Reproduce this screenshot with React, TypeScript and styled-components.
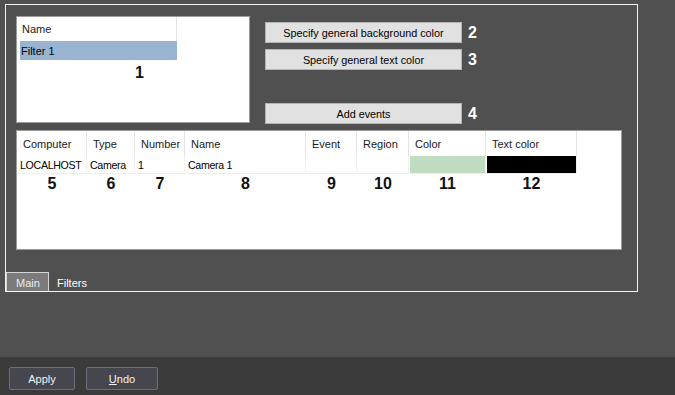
import React from "react";
import styled, { createGlobalStyle } from "styled-components";

const GlobalStyle = createGlobalStyle`
  html, body {
    margin: 0;
    padding: 0;
    background: #505050;
  }
  body {
    font-family: "Liberation Sans", Arial, sans-serif;
    font-size: 11px;
  }
`;

interface Column {
  title: string;
  width: number;
  value: string;
  fill?: string;
  mark: string;
}

const columns: Column[] = [
  { title: "Computer", width: 70, value: "LOCALHOST", mark: "5" },
  { title: "Type", width: 48, value: "Camera", mark: "6" },
  { title: "Number", width: 50, value: "1", mark: "7" },
  { title: "Name", width: 121, value: "Camera 1", mark: "8" },
  { title: "Event", width: 51, value: "", mark: "9" },
  { title: "Region", width: 52, value: "", mark: "10" },
  { title: "Color", width: 77, value: "", fill: "#c0dcc0", mark: "11" },
  { title: "Text color", width: 91, value: "", fill: "#000000", mark: "12" },
];

const App = () => {
  return (
    <>
      <GlobalStyle />
      <Page>
        <Content>
          <Frame>
            <Panel>
              <TopSection>
                <FilterList>
                  <ListHeader>
                    <HeaderCell width={160}>Name</HeaderCell>
                  </ListHeader>
                  <SelectedRow>Filter 1</SelectedRow>
                  <ListMark>1</ListMark>
                </FilterList>

                <ButtonColumn>
                  <ButtonRow>
                    <ActionButton>Specify general background color</ActionButton>
                    <Mark light>2</Mark>
                  </ButtonRow>
                  <ButtonRow>
                    <ActionButton>Specify general text color</ActionButton>
                    <Mark light>3</Mark>
                  </ButtonRow>
                  <ButtonRow offset={27}>
                    <ActionButton>Add events</ActionButton>
                    <Mark light>4</Mark>
                  </ButtonRow>
                </ButtonColumn>
              </TopSection>

              <EventsTable>
                <HeaderRow>
                  {columns.map((col) => (
                    <HeaderCell key={col.title} width={col.width}>
                      {col.title}
                    </HeaderCell>
                  ))}
                </HeaderRow>
                <TableRow>
                  {columns.map((col) =>
                    col.fill ? (
                      <DataCell key={col.title} width={col.width}>
                        <ColorSwatch fill={col.fill} />
                      </DataCell>
                    ) : (
                      <DataCell key={col.title} width={col.width}>
                        {col.value}
                      </DataCell>
                    )
                  )}
                </TableRow>
                <TableRow>
                  {columns.map((col) => (
                    <MarkCell key={col.title} width={col.width}>
                      <Mark>{col.mark}</Mark>
                    </MarkCell>
                  ))}
                </TableRow>
              </EventsTable>
            </Panel>

            <TabBar>
              <Tab active>Main</Tab>
              <Tab>Filters</Tab>
            </TabBar>
          </Frame>
        </Content>

        <Footer>
          <FooterButton width={66}>Apply</FooterButton>
          <FooterButton width={72}>
            <u>U</u>ndo
          </FooterButton>
        </Footer>
      </Page>
    </>
  );
};

export default App;

const Page = styled.div`
  display: flex;
  flex-direction: column;
  width: 675px;
  height: 395px;
  overflow: hidden;
`;

const Content = styled.div`
  flex: 1;
  padding: 4px 0 0 5px;
`;

const Frame = styled.div`
  box-sizing: border-box;
  display: flex;
  flex-direction: column;
  width: 633px;
  height: 288px;
  border: 1px solid #f4f4f4;
`;

const Panel = styled.div`
  flex: 1;
  padding: 11px 0 0 10px;
`;

const TopSection = styled.div`
  display: flex;
  gap: 15px;
`;

const FilterList = styled.div`
  box-sizing: border-box;
  width: 234px;
  height: 107px;
  background: #fff;
  border: 1px solid #9c9c9c;
`;

const ListHeader = styled.div`
  display: flex;
  height: 24px;
`;

const HeaderCell = styled.div<{ width: number }>`
  box-sizing: border-box;
  flex: 0 0 ${(p) => p.width}px;
  display: flex;
  align-items: center;
  padding-left: 5px;
  color: #1a1a1a;
  border-right: 1px solid #e3e3e3;
`;

const SelectedRow = styled.div`
  display: flex;
  align-items: center;
  width: 157px;
  height: 19px;
  margin-left: 3px;
  padding-left: 1px;
  box-sizing: border-box;
  background: #99b4d1;
  color: #000;
`;

const ListMark = styled.div`
  margin-top: 3px;
  padding-left: 118px;
  font-size: 16px;
  font-weight: bold;
  line-height: 20px;
  color: #111;
`;

const ButtonColumn = styled.div`
  display: flex;
  flex-direction: column;
  gap: 6px;
  padding-top: 6px;
`;

const ButtonRow = styled.div<{ offset?: number }>`
  display: flex;
  align-items: center;
  gap: 6px;
  margin-top: ${(p) => p.offset ?? 0}px;
`;

const ActionButton = styled.button`
  box-sizing: border-box;
  width: 197px;
  height: 21px;
  padding: 0;
  background: #e1e1e1;
  border: 1px solid #b4b4b4;
  border-radius: 0;
  font-family: "Liberation Sans", Arial, sans-serif;
  font-size: 10.8px;
  color: #000;
`;

const Mark = styled.span<{ light?: boolean }>`
  font-size: 16px;
  font-weight: bold;
  line-height: 20px;
  color: ${(p) => (p.light ? "#ffffff" : "#111111")};
`;

const EventsTable = styled.div`
  box-sizing: border-box;
  width: 606px;
  height: 120px;
  margin-top: 6px;
  background: #fff;
  border: 1px solid #9c9c9c;
`;

const TableRow = styled.div`
  display: flex;
`;

const HeaderRow = styled(TableRow)`
  height: 25px;

  & > div {
    padding-left: 6px;
  }
`;

const DataCell = styled.div<{ width: number }>`
  box-sizing: border-box;
  flex: 0 0 ${(p) => p.width}px;
  display: flex;
  align-items: center;
  height: 18px;
  padding-left: 3px;
  color: #000;
  font-size: 10.6px;
  letter-spacing: -0.3px;
  border-right: 1px solid #f0f0f0;
  border-bottom: 1px solid #eeeeee;
  white-space: nowrap;
  overflow: hidden;
`;

const ColorSwatch = styled.div<{ fill: string }>`
  align-self: stretch;
  flex: 1;
  margin-left: -2px;
  background: ${(p) => p.fill};
`;

const MarkCell = styled.div<{ width: number }>`
  flex: 0 0 ${(p) => p.width}px;
  text-align: center;
`;

const TabBar = styled.div`
  display: flex;
  height: 19px;
`;

const Tab = styled.div<{ active?: boolean }>`
  box-sizing: border-box;
  display: flex;
  align-items: center;
  height: 19px;
  padding: 1px ${(p) => (p.active ? "9px" : "7px")} 0;
  width: ${(p) => (p.active ? "43px" : "auto")};
  background: ${(p) => (p.active ? "#7b7b7b" : "transparent")};
  border: 1px solid ${(p) => (p.active ? "#d4d4d4" : "transparent")};
  border-bottom: none;
  color: ${(p) => (p.active ? "#eeeeee" : "#ffffff")};
`;

const Footer = styled.div`
  display: flex;
  gap: 11px;
  height: 38px;
  padding: 10px 0 0 9px;
  box-sizing: border-box;
  background: #3b3b3b;
`;

const FooterButton = styled.button<{ width: number }>`
  box-sizing: border-box;
  width: ${(p) => p.width}px;
  height: 23px;
  padding: 0;
  background: #46464f;
  border: 1px solid #6e6e78;
  border-radius: 2px;
  font-family: "Liberation Sans", Arial, sans-serif;
  font-size: 11px;
  color: #f2f2f2;
`;
